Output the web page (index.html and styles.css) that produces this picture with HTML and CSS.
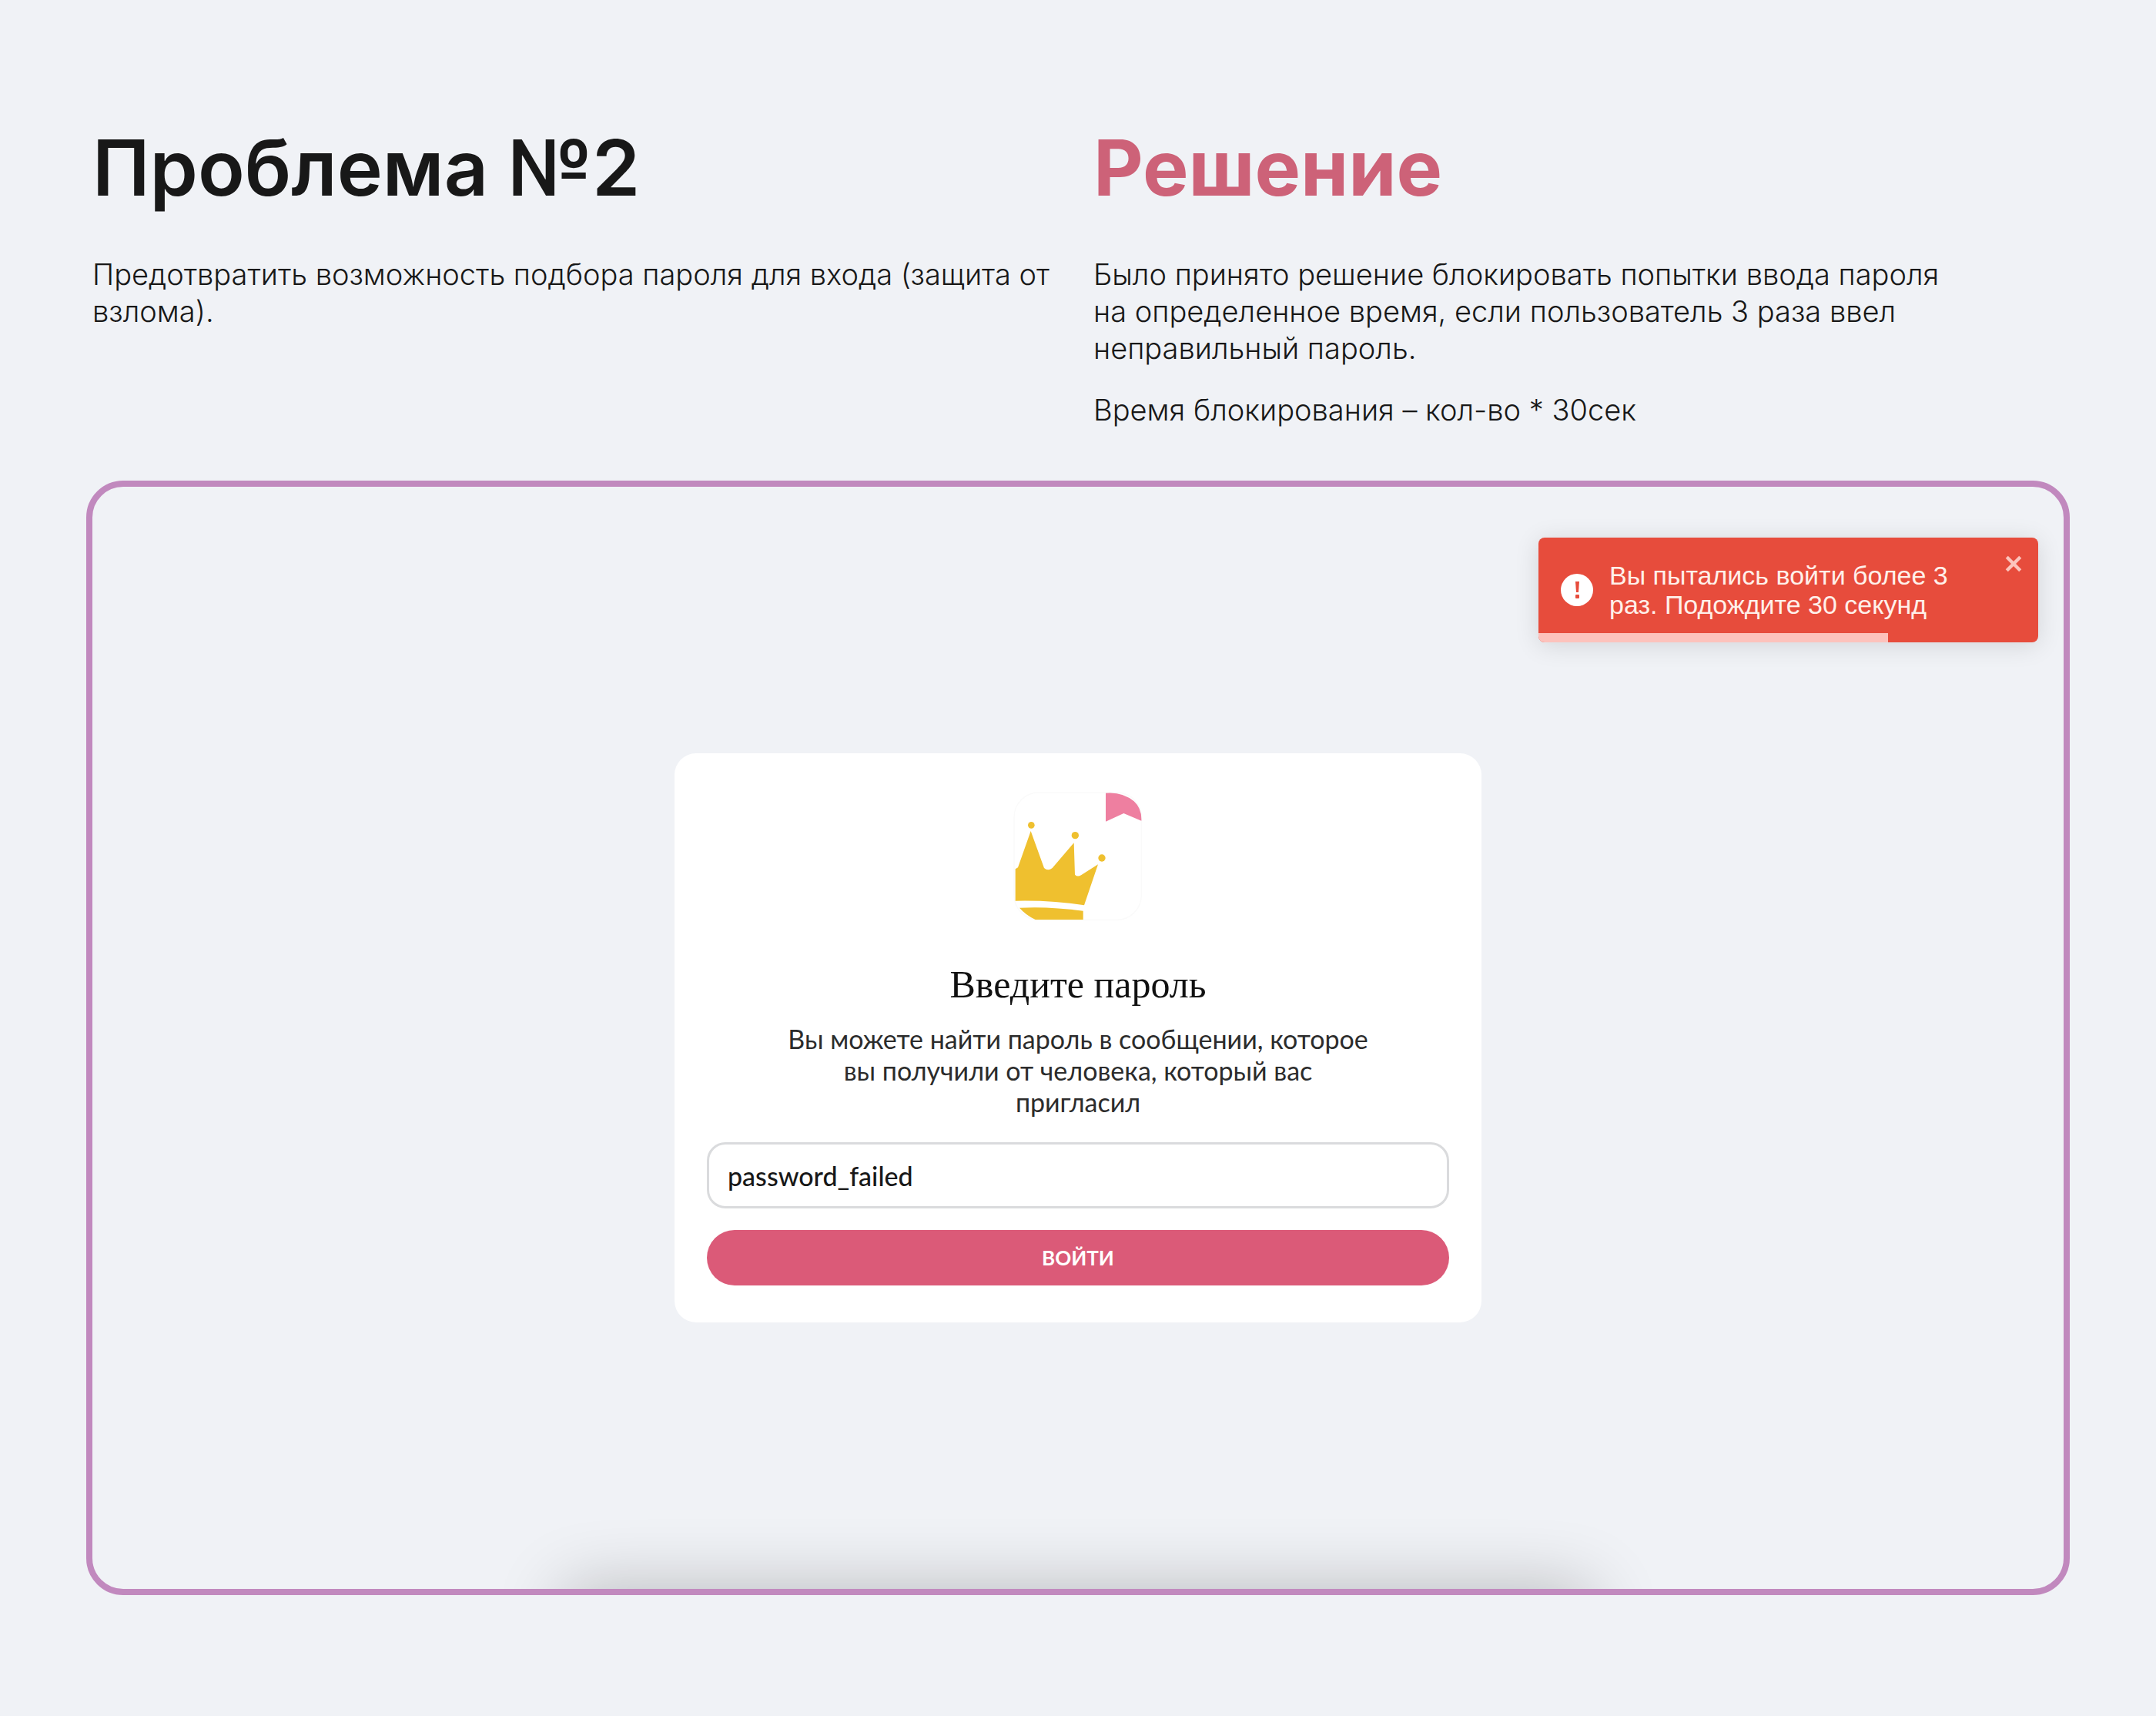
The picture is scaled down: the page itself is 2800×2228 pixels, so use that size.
FILE: index.html
```html
<!DOCTYPE html>
<html lang="ru">
<head>
<meta charset="utf-8">
<meta name="viewport" content="width=device-width, initial-scale=1">
<title>Проблема №2</title>
<link rel="stylesheet" href="styles.css">
</head>
<body>
<main class="page">
  <div class="intro">
    <section class="column">
      <h1 class="heading">Проблема №2</h1>
      <p class="text">Предотвратить возможность подбора пароля для входа (защита от взлома).</p>
    </section>
    <section class="column">
      <h2 class="heading heading-accent">Решение</h2>
      <p class="text">Было принято решение блокировать попытки ввода пароля<br>на определенное время, если пользователь 3 раза ввел<br>неправильный пароль.</p>
      <p class="text">Время блокирования – кол-во * 30сек</p>
    </section>
  </div>

  <section class="frame">
    <form class="card">
      <svg class="logo" viewBox="110 65 504 504" aria-hidden="true">
        <rect class="logo-tile" x="113" y="68" width="496" height="496" rx="96"/>
        <path class="logo-flag" d="M470 70Q535 64 580 102Q611 130 609 178L540 149L470 181Z"/>
        <g class="logo-crown">
          <path d="M118 366L128 360L178 218L230 362Q245 376 262 362L346 264L350 388Q360 398 374 390L440 348L386 507Q260 487 118 490Z"/>
          <path d="M134 517Q250 511 382 529V563H196Q158 545 134 517Z"/>
          <circle cx="180" cy="195" r="13"/>
          <circle cx="351" cy="235" r="14"/>
          <circle cx="455" cy="323" r="14"/>
        </g>
      </svg>
      <h3 class="card-title">Введите пароль</h3>
      <label class="card-text" for="password">Вы можете найти пароль в сообщении, которое<br>вы получили от человека, который вас<br>пригласил</label>
      <input class="field" id="password" type="text" value="password_failed">
      <button class="submit" type="button">ВОЙТИ</button>
    </form>

    <div class="toast" role="alert">
      <svg class="toast-icon" viewBox="0 0 44 44" aria-hidden="true">
        <circle cx="22" cy="22" r="21" fill="#fff"/>
        <path d="M20 11h5l-1 14h-3z" fill="#e74c3c"/>
        <rect x="20" y="28" width="5" height="5" rx="1" fill="#e74c3c"/>
      </svg>
      <p class="toast-text">Вы пытались войти более 3<br>раз. Подождите 30 секунд</p>
      <button class="toast-close" type="button" aria-label="Закрыть">
        <svg viewBox="0 0 22 22" aria-hidden="true"><path d="M3 3L19 19M19 3L3 19"/></svg>
      </button>
      <div class="toast-progress"></div>
    </div>
  </section>
</main>
</body>
</html>
```
FILE: styles.css
```css
* {
  box-sizing: border-box;
}

body {
  margin: 0;
  background: #f0f2f6;
  color: #181818;
  font-family: Inter, "Noto Sans", sans-serif;
}

h1, h2, h3, p {
  margin: 0;
}

.page {
  padding: 152px 112px;
}

.intro {
  display: grid;
  grid-template-columns: 1fr 1fr;
  gap: 40px;
  padding: 0 8px;
}

.column {
  display: flex;
  flex-direction: column;
  gap: 32px;
}

.heading {
  margin-bottom: 16px;
  font-size: 100px;
  font-weight: 600;
  line-height: 132px;
}

.heading-accent {
  color: #cd6278;
  font-weight: 700;
}

.text {
  font-size: 38px;
  font-weight: 300;
  line-height: 48px;
}

.frame {
  position: relative;
  display: flex;
  justify-content: center;
  margin-top: 68px;
  padding: 346px 24px;
  overflow: hidden;
  border: 8px solid #c189be;
  border-radius: 48px;
}

/* soft shadow rising from below the lower edge */
.frame::after {
  content: "";
  position: absolute;
  top: 100%;
  left: 24%;
  right: 24%;
  height: 200px;
  box-shadow: 0 0 90px rgba(0, 0, 0, 0.24);
}

.card {
  display: flex;
  flex-direction: column;
  align-items: center;
  width: 1048px;
  max-width: 100%;
  padding: 50px 42px 48px;
  border-radius: 28px;
  background: #fff;
}

.logo {
  width: 168px;
  height: 168px;
}

.logo-tile {
  fill: #fff;
  stroke: #fafafa;
  stroke-width: 4;
}

.logo-flag {
  fill: #ee7fa0;
}

.logo-crown {
  fill: #efc02f;
}

.card-title {
  margin-top: 52px;
  color: #111;
  font-family: "Liberation Serif", serif;
  font-size: 50px;
  font-weight: 400;
  line-height: 60px;
}

.card-text {
  margin: 20px 0 32px;
  color: #2c2c2c;
  font-family: Lato, "Noto Sans", sans-serif;
  font-size: 34px;
  line-height: 41px;
  text-align: center;
}

.field {
  width: 100%;
  height: 86px;
  padding: 0 24px;
  border: 3px solid #dadbdd;
  border-radius: 24px;
  background: #fff;
  color: #181818;
  font-family: Lato, "Noto Sans", sans-serif;
  font-size: 34px;
  font-weight: 500;
}

.submit {
  width: 100%;
  height: 72px;
  margin-top: 28px;
  padding: 0;
  border: 0;
  border-radius: 36px;
  background: #db5a78;
  color: #fff;
  font-family: Lato, "Noto Sans", sans-serif;
  font-size: 26px;
  font-weight: 700;
}

.toast {
  position: absolute;
  top: 66px;
  right: 33px;
  display: flex;
  align-items: center;
  gap: 20px;
  width: 649px;
  height: 136px;
  padding: 0 28px;
  overflow: hidden;
  border-radius: 8px;
  background: #e74c3c;
  box-shadow: 0 4px 32px rgba(0, 0, 0, 0.12);
}

.toast-icon {
  width: 44px;
  height: 44px;
}

.toast-text {
  color: #fff0ea;
  font-family: "Liberation Sans", sans-serif;
  font-size: 34px;
  line-height: 38px;
}

.toast-close {
  position: absolute;
  top: 22px;
  right: 20px;
  display: flex;
  padding: 0;
  border: 0;
  background: none;
}

.toast-close svg {
  width: 24px;
  height: 24px;
  fill: none;
  stroke: #fcc5bd;
  stroke-width: 4;
}

.toast-progress {
  position: absolute;
  bottom: 0;
  left: 0;
  width: 70%;
  height: 12px;
  background: #fdc2bc;
}
```
